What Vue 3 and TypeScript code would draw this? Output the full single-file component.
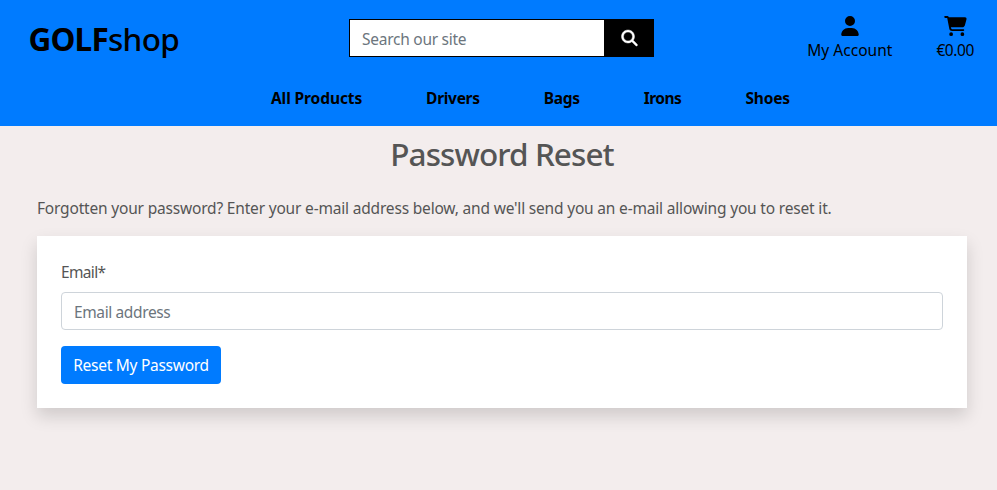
<script setup lang="ts">
import { ref } from 'vue'

interface Category {
  label: string
  key: string
}

const categories: Category[] = [
  { label: 'All Products', key: 'all' },
  { label: 'Drivers', key: 'drivers' },
  { label: 'Bags', key: 'bags' },
  { label: 'Irons', key: 'irons' },
  { label: 'Shoes', key: 'shoes' },
]

const query = ref('')
const email = ref('')
</script>

<template>
  <div class="page">
    <header class="header">
      <div class="topbar">
        <a class="logo"><strong class="logo-bold">GOLF</strong><span class="logo-light">shop</span></a>
        <form class="search" @submit.prevent>
          <input v-model="query" class="search-input" type="text" placeholder="Search our site" />
          <button class="search-button" type="submit" aria-label="Search">
            <svg class="search-icon" viewBox="0 0 512 512">
              <path d="M416 208c0 45.900-14.900 88.300-40 122.700L502.600 457.400c12.500 12.500 12.500 32.800 0 45.300s-32.800 12.500-45.300 0L330.700 376c-34.400 25.200-76.800 40-122.700 40C93.100 416 0 322.900 0 208S93.100 0 208 0S416 93.100 416 208zM208 352a144 144 0 1 0 0-288 144 144 0 1 0 0 288z" />
            </svg>
          </button>
        </form>
        <div class="actions">
          <a class="action account">
            <svg class="user-icon" viewBox="0 0 448 512">
              <path d="M224 256A128 128 0 1 0 224 0a128 128 0 1 0 0 256zm-45.700 48C79.800 304 0 383.800 0 482.300C0 498.700 13.300 512 29.700 512H418.300c16.400 0 29.700-13.300 29.700-29.700C448 383.800 368.200 304 269.700 304H178.300z" />
            </svg>
            <span class="account-label">My Account</span>
          </a>
          <a class="action cart">
            <svg class="cart-icon" viewBox="0 0 576 512">
              <path d="M0 24C0 10.700 10.700 0 24 0H69.500c22 0 41.500 12.800 50.600 32h411c26.300 0 45.500 25 38.600 50.400l-41 152.300c-8.500 31.400-37 53.300-69.500 53.300H170.700l5.400 28.500c2.200 11.300 12.100 19.500 23.600 19.500H488c13.300 0 24 10.700 24 24s-10.700 24-24 24H199.700c-34.600 0-64.300-24.600-70.700-58.500L77.400 54.500c-.7-3.800-4-6.500-7.900-6.500H24C10.700 48 0 37.300 0 24zM128 464a48 48 0 1 1 96 0 48 48 0 1 1 -96 0zm336-48a48 48 0 1 1 0 96 48 48 0 1 1 0-96z" />
            </svg>
            <span class="cart-label">€0.00</span>
          </a>
        </div>
      </div>
      <nav class="nav">
        <a v-for="item in categories" :key="item.key" class="nav-item" :class="item.key">{{ item.label }}</a>
      </nav>
    </header>

    <main class="content">
      <h2 class="title">Password Reset</h2>
      <p class="intro">Forgotten your password? Enter your e-mail address below, and we'll send you an e-mail allowing you to reset it.</p>
      <form class="card" @submit.prevent>
        <label class="label" for="email">Email*</label>
        <input id="email" v-model="email" class="field" type="email" placeholder="Email address" />
        <button class="submit" type="submit">Reset My Password</button>
      </form>
    </main>
  </div>
</template>

<style>
body {
  background: #f3eded;
}
</style>

<style scoped>
.page,
.page * {
  box-sizing: border-box;
}
.page {
  min-height: 490px;
  background: #f3eded;
  color: #555;
  font-family: "Noto Sans", "Open Sans", sans-serif;
  font-size: 15.5px;
  line-height: 24px;
}
svg {
  display: block;
  fill: currentColor;
}
.header {
  height: 126px;
  background: #007bff;
  color: #000;
}
.topbar {
  display: grid;
  grid-template-columns: 349px 305px 1fr;
  height: 82px;
}
.logo {
  padding: 15px 0 0 28.5px;
  font-size: 31.5px;
  line-height: 48px;
  white-space: nowrap;
}
.logo-bold {
  font-weight: 700;
  letter-spacing: -0.8px;
}
.logo-light {
  font-weight: 500;
  letter-spacing: -0.65px;
}
.search {
  display: flex;
  height: 38px;
  margin-top: 19px;
}
.search-input {
  flex: 1;
  min-width: 0;
  padding: 2px 12px 0;
  border: 1px solid #000;
  border-right: 0;
  border-radius: 0;
  outline: 0;
  background: #fff;
  font: inherit;
  letter-spacing: -0.26px;
}
.search-button {
  display: flex;
  justify-content: center;
  width: 50px;
  padding: 11px 0 0;
  border: 0;
  background: #000;
  color: #fff;
}
.search-icon {
  width: 17px;
  height: 16px;
  overflow: visible;
  stroke: currentColor;
  stroke-width: 14;
}
.search-input::placeholder,
.field::placeholder {
  color: #6c757d;
  opacity: 1;
}
.actions {
  display: flex;
  justify-content: flex-end;
  gap: 44px;
  padding: 16px 23px 0 0;
}
.action {
  display: flex;
  flex-direction: column;
  align-items: center;
  gap: 2px;
  white-space: nowrap;
}
.user-icon {
  width: 18px;
  height: 20px;
}
.cart-icon {
  width: 23px;
  height: 20px;
}
.account-label {
  letter-spacing: 0.02px;
}
.cart-label {
  letter-spacing: -0.4px;
}
.nav {
  display: flex;
  justify-content: center;
  gap: 64px;
  padding: 4px 0 0 64px;
  font-weight: 700;
}
.all {
  letter-spacing: -0.1px;
}
.drivers {
  letter-spacing: -0.3px;
}
.bags {
  letter-spacing: -0.3px;
}
.irons {
  letter-spacing: -0.5px;
}
.shoes {
  letter-spacing: -0.15px;
}
.content {
  padding: 9px 30px 0 37px;
}
.title {
  margin: 0;
  font-size: 31.5px;
  font-weight: 500;
  line-height: 38px;
  letter-spacing: -0.93px;
  text-align: center;
}
.intro {
  margin: 23px 0 16px;
  letter-spacing: -0.184px;
  white-space: nowrap;
}
.card {
  height: 172px;
  padding: 24px;
  background: #fff;
  box-shadow: 0 8px 16px rgba(0, 0, 0, 0.15);
}
.label {
  display: block;
  margin-bottom: 8px;
  letter-spacing: -0.65px;
}
.field {
  display: block;
  width: 100%;
  height: 38px;
  padding: 2px 12px 0;
  border: 1px solid #ced4da;
  border-radius: 4px;
  outline: 0;
  background: #fff;
  font: inherit;
  letter-spacing: -0.38px;
}
.submit {
  display: block;
  width: 160px;
  height: 38px;
  margin-top: 16px;
  padding: 0;
  border: 0;
  border-radius: 4px;
  background: #007bff;
  color: #fff;
  font: inherit;
  letter-spacing: -0.27px;
  white-space: nowrap;
}
</style>
